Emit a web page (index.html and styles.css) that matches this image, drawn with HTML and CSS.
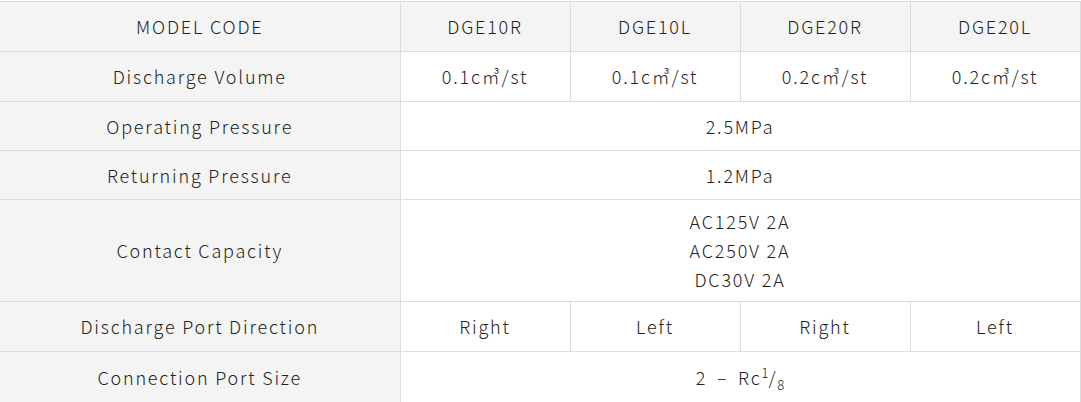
FILE: index.html
```html
<!DOCTYPE html>
<html>
<head>
<meta charset="utf-8">
<link rel="stylesheet" href="styles.css">
</head>
<body>
<table class="spec">
  <colgroup>
    <col class="c-label">
    <col class="c-val"><col class="c-val"><col class="c-val"><col class="c-val">
  </colgroup>
  <tr class="r-head">
    <th>MODEL CODE</th>
    <th>DGE10R</th><th>DGE10L</th><th>DGE20R</th><th>DGE20L</th>
  </tr>
  <tr class="r-a">
    <th>Discharge Volume</th>
    <td>0.1c㎥/st</td><td>0.1c㎥/st</td><td>0.2c㎥/st</td><td>0.2c㎥/st</td>
  </tr>
  <tr class="r-b">
    <th>Operating Pressure</th>
    <td colspan="4">2.5MPa</td>
  </tr>
  <tr class="r-b">
    <th>Returning Pressure</th>
    <td colspan="4">1.2MPa</td>
  </tr>
  <tr class="r-tall">
    <th>Contact Capacity</th>
    <td colspan="4">AC125V 2A<br>AC250V 2A<br>DC30V 2A</td>
  </tr>
  <tr class="r-a">
    <th>Discharge Port Direction</th>
    <td>Right</td><td>Left</td><td>Right</td><td>Left</td>
  </tr>
  <tr class="r-last">
    <th>Connection Port Size</th>
    <td colspan="4">2 <span class="dash">–</span> Rc<sup>1</sup>/<sub>8</sub></td>
  </tr>
</table>
</body>
</html>
```

FILE: styles.css
```css
html, body {
  margin: 0;
  padding: 0;
  background: #ffffff;
}
body {
  padding-top: 1px;
}
.spec {
  border-collapse: collapse;
  width: 1080px;
  table-layout: fixed;
  font-family: "Noto Sans CJK JP", "Noto Sans", sans-serif;
  font-weight: 300;
  font-size: 18px;
  letter-spacing: 1.8px;
  color: #222222;
}
.c-label { width: 400px; }
.c-val { width: 170px; }
.spec th, .spec td {
  border: 1px solid #dddddd;
  text-align: center;
  vertical-align: middle;
  font-weight: 300;
  padding: 0 4px;
  line-height: 29px;
}
.spec th {
  background: #f4f4f4;
}
.r-head th { height: 49px; }
.r-a th, .r-a td { height: 49px; }
.r-b th, .r-b td { height: 48px; }
.r-tall th, .r-tall td { height: 101px; }
.r-last th, .r-last td { height: 51px; }
.spec tr > th:first-child { border-left: none; }
.dash {
  margin: 0 4px;
}
.spec sup, .spec sub {
  font-size: 13px;
  line-height: 0;
  letter-spacing: 0;
}
```
